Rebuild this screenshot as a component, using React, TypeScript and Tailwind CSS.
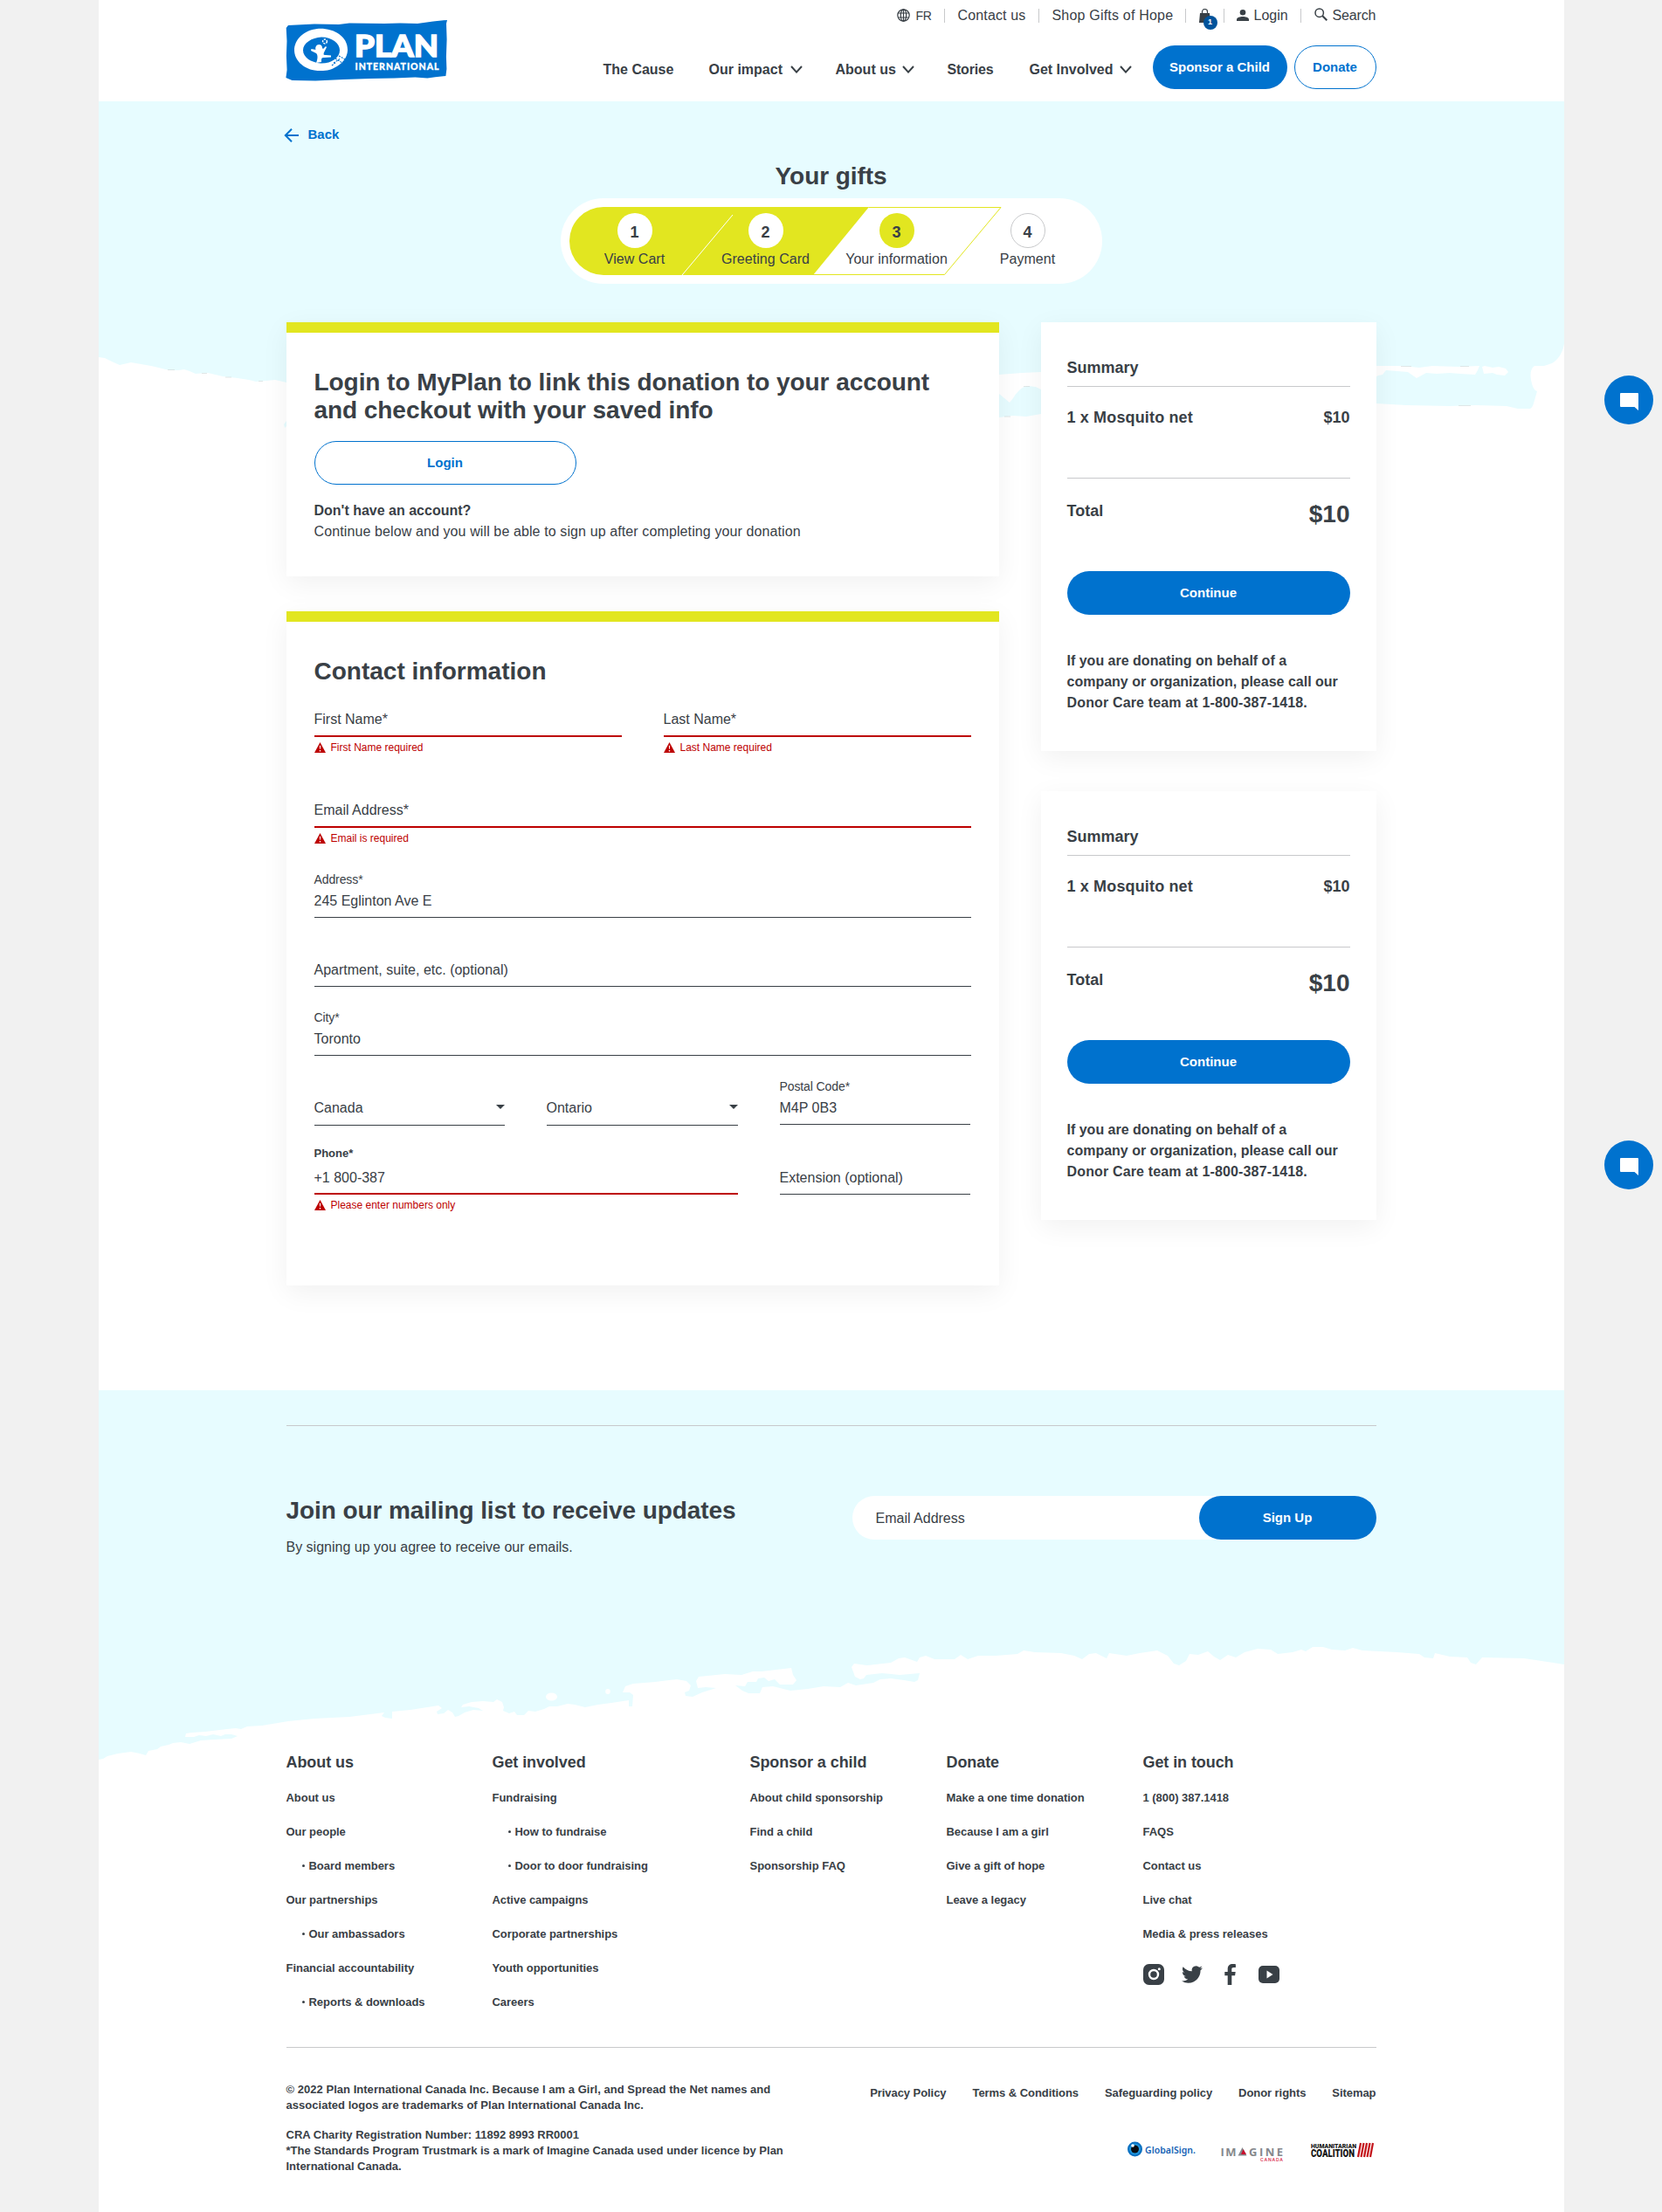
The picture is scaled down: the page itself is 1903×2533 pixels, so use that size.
import React from 'react'
import clsx from 'clsx'

type FieldProps = {
  width: string
  height: string
  value: string
  label?: string
  labelClass?: string
  padClass?: string
  error?: string
  select?: boolean
}

function WarningIcon() {
  return (
    <svg width="13" height="12" viewBox="0 0 13 12" className="shrink-0">
      <path d="M6.5 0 13 12H0z" fill="#bd0000" />
      <path d="M5.8 3.8h1.4l-.3 4h-.8zM5.8 9h1.4v1.4H5.8z" fill="#fff" />
    </svg>
  )
}

function Field({ width, height, value, label, labelClass, padClass, error, select }: FieldProps) {
  return (
    <div className={width}>
      <div
        className={clsx(
          'flex flex-col justify-end',
          height,
          error ? 'border-b-2 border-[#bd0000]' : 'border-b border-[#394046]',
          padClass ?? (select ? 'pb-[7px]' : 'pb-[6px]'),
        )}
      >
        {label && <span className={clsx('leading-4', labelClass ?? 'mb-[5px] text-sm tracking-[-0.1px]')}>{label}</span>}
        <span className="flex items-center justify-between leading-6">
          {value}
          {select && (
            <svg width="10" height="5" viewBox="0 0 10 5" className="-mt-1">
              <path d="M0 0h10L5 5z" fill="#394046" />
            </svg>
          )}
        </span>
      </div>
      {error && (
        <div className="flex h-5 items-end gap-[6px] text-xs leading-4 text-[#bd0000]">
          <span className="pb-[2px]">
            <WarningIcon />
          </span>
          {error}
        </div>
      )}
    </div>
  )
}

function Chevron() {
  return (
    <svg width="14" height="9" viewBox="0 0 14 9" className="ml-2" fill="none">
      <path d="m1 1 6 6.6L13 1" stroke="#394046" strokeWidth="2" />
    </svg>
  )
}

function Rule() {
  return <span className="h-4 w-px bg-[#c8c9cb]" />
}

function Logo() {
  return (
    <svg width="186" height="72" viewBox="327 22 186 72">
      <path
        fill="#0072ce"
        d="m330 29 30-1.600 28 .5 12-1.400 40 .6 18-.5 20 .4 18-2.500 16-1.600-1 4 .6 18-.7 20 .5 14-1 8-12 1.300-9 1.200-14-1-24 1.200-28 .3-30 1.100-32 1.500-27-.4-7-3 1.200-9-.7-16 .6-17-.8-15z"
      />
      <path
        fill="#fff"
        fillRule="evenodd"
        d="M337 57.500c0-12 11-23 26-24.500 18-1.500 35 8 35 24 0 12-11 20-21 23-4 1-11 1.400-17 .5-13-2-23-12-23-23zm10 0c0 8 9 14 20 15 12 .5 22-6 22-15 0-8-9-15-21-15-11 .5-21 7-21 15z"
      />
      <path
        fill="#fff"
        d="M365 51c3 0 4 2 4 4l1 1 3-3 1 1-3 6c-1 3 0 3 2 3l6 .5v2l-8 .5c-3 0-3 1-3 5l-6 1c2-5 2-9 0-11l-6-3 .5-2 5 1c-1-3 1-6 3.500-6z"
      />
      <circle cx="372" cy="47.500" r="2.400" fill="none" stroke="#fff" strokeWidth="1.500" strokeDasharray="2 1" />
      <path d="m382 72 8-5M384 67l8 5M388 64l7 4M380 75l5-4" stroke="#0072ce" strokeWidth="1.100" strokeDasharray="2 1.200" />
      <text
        x="406"
        y="64.500"
        fill="#fff"
        stroke="#fff"
        strokeWidth="1.400"
        fontFamily="Lato"
        fontWeight="900"
        fontSize="34"
        textLength="96"
        lengthAdjust="spacingAndGlyphs"
      >
        PLAN
      </text>
      <text x="406.500" y="80" fill="#fff" stroke="#fff" strokeWidth=".3" fontFamily="Lato" fontWeight="900" fontSize="10.500" textLength="96">
        INTERNATIONAL
      </text>
    </svg>
  )
}

function Header() {
  return (
    <header className="flex h-[116px] justify-between bg-white pr-[215px] pl-[214px]">
      <div className="pt-[22px]">
        <Logo />
      </div>
      <div className="flex flex-col items-end whitespace-nowrap">
        <div className="flex h-[35px] items-center">
          <svg width="15" height="15" viewBox="0 0 15 15" fill="none" stroke="#394046" strokeWidth="1.200">
            <circle cx="7.500" cy="7.500" r="6.700" />
            <ellipse cx="7.500" cy="7.500" rx="3.200" ry="6.700" />
            <path d="M7.500.8v13.400M1.500 5h12M1.500 10h12" />
          </svg>
          <span className="ml-[7px] w-[18px] text-sm tracking-[-0.4px]">FR</span>
          <span className="ml-[14px] flex"><Rule /></span>
          <span className="ml-[15px] w-[78px] tracking-[0.15px]">Contact us</span>
          <span className="ml-[14px] flex"><Rule /></span>
          <span className="ml-[15px] w-[138px] tracking-[0.2px]">Shop Gifts of Hope</span>
          <span className="ml-[14px] flex"><Rule /></span>
          <span className="relative ml-[15px] w-[13px]">
            <svg width="13" height="16" viewBox="0 0 13 16">
              <path d="M1 5h11l1 11H0z" fill="#394046" />
              <path d="M3.500 6V3.500a3 3 0 0 1 6 0V6" fill="none" stroke="#394046" strokeWidth="1.200" />
            </svg>
            <span className="absolute top-2 left-[5px] flex size-4 items-center justify-center rounded-full bg-[#00539b] text-[9px] font-bold text-white">
              1
            </span>
          </span>
          <span className="ml-[15px] flex"><Rule /></span>
          <svg width="14" height="13" viewBox="0 0 14 13" className="ml-[14px]" fill="#394046">
            <ellipse cx="7" cy="3.300" rx="3.300" ry="3.300" />
            <path d="M0 13v-1.700C0 9 4 8 7 8s7 1 7 3.300V13z" />
          </svg>
          <span className="ml-[6px] w-[39px]">Login</span>
          <span className="ml-[14px] flex"><Rule /></span>
          <svg width="15" height="15" viewBox="0 0 15 15" className="-mt-[2px] ml-[15px]" fill="none" stroke="#394046">
            <circle cx="5.700" cy="5.700" r="4.700" strokeWidth="1.500" />
            <path d="m9.300 9.300 5 5" strokeWidth="2" />
          </svg>
          <span className="ml-[6px] w-[50px] tracking-[-0.15px]">Search</span>
        </div>
        <nav className="mt-[17px] flex h-[50px] items-center font-bold">
          <div className="mt-[5px] flex items-center">
            <span className="w-[81px]">The Cause</span>
            <span className="ml-10 w-[85px]">Our impact</span>
            <Chevron />
            <span className="ml-[38px] w-[68px]">About us</span>
            <Chevron />
            <span className="ml-[38px] w-[54px] tracking-[-0.2px]">Stories</span>
            <span className="ml-10 w-[95px]">Get Involved</span>
            <Chevron />
          </div>
          <span className="ml-6 flex h-[50px] w-[154px] items-center justify-center rounded-full bg-[#0072ce] pt-px text-[15px] text-white">
            Sponsor a Child
          </span>
          <span className="ml-2 flex h-[50px] w-[94px] items-center justify-center rounded-full border border-[#0072ce] pt-px text-[15px] text-[#0072ce]">
            Donate
          </span>
        </nav>
      </div>
    </header>
  )
}

const steps = [
  { n: 1, label: 'View Cart', tone: 'bg-white' },
  { n: 2, label: 'Greeting Card', tone: 'bg-white' },
  { n: 3, label: 'Your information', tone: 'bg-[#e2e620]' },
  { n: 4, label: 'Payment', tone: 'bg-white border border-[#c8c9cb]' },
]

function Stepper() {
  return (
    <div className="relative mx-auto h-[98px] w-[620px] rounded-full bg-white">
      <svg width="620" height="98" viewBox="642 227 620 98" className="absolute inset-0">
        <path d="M691 237H995L931 315H691a39 39 0 0 1 0-78z" fill="#e2e620" />
        <path d="m839 246-58 69" stroke="#fff" />
        <path d="M994.500 237.500H1146L1081.500 314.500H931" fill="none" stroke="#e2e620" />
      </svg>
      <ol className="relative flex pt-[17px] pl-[10px]">
        {steps.map((s) => (
          <li key={s.n} className="flex w-[150px] flex-col items-center">
            <span className={clsx('flex size-10 items-center justify-center rounded-full pt-[3px] text-lg leading-none font-bold', s.tone)}>
              {s.n}
            </span>
            <span className="mt-px leading-6 tracking-[0.05px]">{s.label}</span>
          </li>
        ))}
      </ol>
    </div>
  )
}

function Summary() {
  return (
    <section className="h-[491px] bg-white px-[30px] pt-[40px] font-bold shadow-[0_8px_30px_rgba(0,0,0,0.06)]">
      <h3 className="h-[34px] border-b border-[#c8c9cb] text-lg leading-6">Summary</h3>
      <div className="flex h-[105px] justify-between border-b border-[#c8c9cb] pt-[23px] text-lg leading-6">
        <span className="tracking-[0.15px]">1 x Mosquito net</span>
        <span>$10</span>
      </div>
      <div className="flex h-[106px] justify-between pt-[25px]">
        <span className="text-lg leading-6">Total</span>
        <span className="text-[28px] leading-8">$10</span>
      </div>
      <button className="flex h-[50px] w-full items-center justify-center rounded-full bg-[#0072ce] text-[15px] font-bold text-white">
        Continue
      </button>
      <p className="mt-[41px] leading-6 whitespace-nowrap">
        If you are donating on behalf of a<br />
        company or organization, please call our<br />
        <span className="tracking-[0.15px]">Donor Care team at 1-800-387-1418.</span>
      </p>
    </section>
  )
}

const topWash =
  'M113 116H1791V394Q1789 404 1784 410T1774 417L1768 419 1757 419Q1751 423 1753 435T1760 448Q1758 455 1756 462T1750 468L1738 468 1725 465 1690 464 1660 465 1610 464 1575 462V474H1200L1192 474 1175 477 1160 476 1144 478V480H336L326 490 325 486 328 482V438L315 435 305 436 293 437 285 435 272 433 255 431 238 427 224 428 217 425 211 423 204 424 194 424 173 419 150 415 137 418 128 414 120 410 113 409Z'

function TopWash() {
  return (
    <svg width="1678" height="380" viewBox="113 116 1678 380" className="absolute top-0 left-0">
      <path d={topWash} fill="#e7fcff" />
      <g fill="#fff">
        <path d="M1144 429 1170 427 1192 426V446L1186 443 1178 442Q1172 442 1167 447T1160 456L1156 461 1150 456 1144 451Z" />
        <path d="M1575 419 1605 419 1625 421 1640 419 1670 420 1694 419 1692 424 1689 429 1672 428 1660 427 1645 428 1633 427 1622 433 1612 426 1600 425 1587 424 1583 429 1578 430 1575 432Z" />
        <path d="M1697 420 1700 419 1709 421 1716 420 1724 422 1727 426 1723 430 1714 429 1709 427 1699 428Z" />
      </g>
      <path
        d="M192 423.500h8M231 427.500h6M258 432h7M296 436.500h5M1604 419.500h12M1672 419.500h10M1150 477h7M1172 442.500h7M1670 464.500h14"
        stroke="#d5dcdd"
        strokeWidth=".7"
      />
    </svg>
  )
}

const brushEdge =
  '113,2015 118,2014 123,2011 135,2008 150,2006 160,2008 167,2010 170,2005 180,2003 184,2000 193,1998 198,1996 207,1995 217,1997 230,1993 245,1992 265,1991 272,1988 265,1986 258,1986 253,1988 244,1986 236,1988 228,1987 222,1989 212,1989 213,1985 220,1984 235,1983 260,1980 270,1979 276,1980 283,1977 300,1976 330,1971 360,1968 400,1966 440,1961 437,1965 441,1967 449,1968 449,1960 470,1958 502,1953 506,1956 500,1960 501,1963 508,1962 513,1958 518,1961 521,1966 525,1965 532,1961 542,1958 553,1959 548,1956 537,1954 528,1955 530,1952 540,1949 553,1948 565,1949 569,1946 575,1949 577,1955 576,1959 583,1962 589,1960 592,1964 600,1964 605,1959 613,1960 623,1957 629,1954 638,1954 650,1951 658,1952 670,1955 685,1952 700,1950 720,1947 720,1954 724,1954 725,1941 721,1938 713,1938 716,1931 725,1928 750,1926 775,1923 786,1925 791,1930 789,1936 784,1938 785,1942 793,1943 804,1938 820,1933 808,1932 799,1933 797,1925 800,1920 830,1917 849,1918 862,1914 872,1914 906,1910 908,1918 912,1924 908,1929 893,1929 887,1923 880,1925 875,1921 868,1922 866,1926 856,1926 853,1931 842,1930 850,1936 857,1939 870,1939 873,1932 885,1931 905,1936 925,1934 943,1931 962,1932 971,1927 980,1930 1000,1927 1008,1923 1020,1922 1035,1924 1047,1926 1051,1924 1053,1916 1030,1918 1010,1916 992,1918 989,1922 985,1923 979,1920 975,1909 978,1905 985,1906 993,1907 1020,1904 1029,1899 1036,1898 1050,1903 1053,1898 1060,1896 1070,1900 1093,1900 1100,1895 1108,1900 1120,1896 1140,1896 1165,1894 1172,1890 1185,1892 1215,1893 1230,1896 1239,1900 1247,1894 1255,1893 1267,1899 1270,1893 1290,1896 1305,1893 1325,1890 1337,1896 1344,1905 1350,1907 1358,1902 1362,1894 1372,1895 1383,1891 1390,1897 1397,1901 1406,1895 1415,1898 1425,1892 1440,1888 1455,1889 1463,1894 1480,1892 1490,1889 1495,1891 1503,1886 1515,1886 1525,1889 1540,1890 1549,1887 1560,1890 1600,1892 1625,1894 1631,1898 1641,1899 1643,1893 1660,1897 1680,1898 1684,1904 1690,1906 1697,1898 1745,1899 1765,1902 1791,1906 1791,2040 113,2040'

type FootLink = { text: string; sub?: boolean }
const columns: { title: string; width: string; links: FootLink[] }[] = [
  {
    title: 'About us',
    width: 'w-[236px]',
    links: [
      { text: 'About us' },
      { text: 'Our people' },
      { text: 'Board members', sub: true },
      { text: 'Our partnerships' },
      { text: 'Our ambassadors', sub: true },
      { text: 'Financial accountability' },
      { text: 'Reports & downloads', sub: true },
    ],
  },
  {
    title: 'Get involved',
    width: 'w-[295px]',
    links: [
      { text: 'Fundraising' },
      { text: 'How to fundraise', sub: true },
      { text: 'Door to door fundraising', sub: true },
      { text: 'Active campaigns' },
      { text: 'Corporate partnerships' },
      { text: 'Youth opportunities' },
      { text: 'Careers' },
    ],
  },
  {
    title: 'Sponsor a child',
    width: 'w-[225px]',
    links: [{ text: 'About child sponsorship' }, { text: 'Find a child' }, { text: 'Sponsorship FAQ' }],
  },
  {
    title: 'Donate',
    width: 'w-[225px]',
    links: [
      { text: 'Make a one time donation' },
      { text: 'Because I am a girl' },
      { text: 'Give a gift of hope' },
      { text: 'Leave a legacy' },
    ],
  },
  {
    title: 'Get in touch',
    width: 'w-[260px]',
    links: [
      { text: '1 (800) 387.1418' },
      { text: 'FAQS' },
      { text: 'Contact us' },
      { text: 'Live chat' },
      { text: 'Media & press releases' },
    ],
  },
]

function Social() {
  return (
    <div className="mt-[15px] flex h-6 items-center text-[#394046]">
      <svg width="24" height="24" viewBox="0 0 24 24">
        <rect width="24" height="24" rx="6.500" fill="currentColor" />
        <circle cx="12" cy="12" r="5" fill="none" stroke="#fff" strokeWidth="2.400" />
        <circle cx="18.300" cy="5.700" r="1.500" fill="#fff" />
      </svg>
      <svg width="24" height="24" viewBox="0 0 24 24" className="ml-5" fill="currentColor">
        <path d="M23.950 4.570a10 10 0 0 1-2.820.77 4.960 4.960 0 0 0 2.160-2.720c-.95.550-2 .95-3.130 1.180a4.920 4.920 0 0 0-8.380 4.480C7.690 8.090 4.070 6.130 1.640 3.160a4.820 4.820 0 0 0-.67 2.480c0 1.710.87 3.210 2.190 4.100a4.900 4.900 0 0 1-2.230-.62v.06a4.920 4.920 0 0 0 3.950 4.830 5 5 0 0 1-2.210.08 4.940 4.940 0 0 0 4.600 3.420A9.870 9.870 0 0 1 0 19.540a13.990 13.990 0 0 0 7.550 2.210c9.050 0 14-7.500 14-13.980 0-.21 0-.42-.02-.63a9.940 9.940 0 0 0 2.460-2.550z" />
      </svg>
      <svg width="14" height="24" viewBox="0 0 14 24" className="ml-[25px]" fill="currentColor">
        <path d="M3.700 24V13.200H.3V9h3.400V5.800C3.700 2 6 0 9.500 0c1.600 0 3 .1 3.400.2v3.900h-2.300c-1.900 0-2.300.9-2.300 2.200V9h4.400l-.6 4.200H8.300V24z" />
      </svg>
      <svg width="24" height="20" viewBox="0 0 24 20" className="ml-[25px]">
        <rect width="24" height="20" rx="5" fill="currentColor" />
        <path d="m9.500 5.500 7 4.500-7 4.500z" fill="#fff" />
      </svg>
    </div>
  )
}

function Partners() {
  return (
    <svg width="285" height="26" viewBox="1291 2451 285 26">
      <circle cx="1299.500" cy="2461" r="8.500" fill="#0b6fc0" />
      <circle cx="1299.500" cy="2461" r="6.500" fill="#1f97df" />
      <circle cx="1299.500" cy="2461" r="4.500" fill="#0a0d12" />
      <circle cx="1297" cy="2457" r="1.800" fill="#fff" />
      <text x="1311" y="2465.500" fontFamily="Noto Sans" fontWeight="600" fontSize="10.500" fill="#1763b5" textLength="58">
        GlobalSign.
      </text>
      <g fontFamily="Open Sans" fontSize="13" fill="#85888c">
        <text x="1397.500" y="2468.500" textLength="18">IM</text>
        <text x="1430" y="2468.500" textLength="39">GINE</text>
      </g>
      <path d="m1422.500 2459 5 9.500h-10z" fill="#85888c" />
      <path d="m1423.500 2461 3.500 6h-6z" fill="#c8102e" />
      <text x="1443" y="2474.500" fontFamily="Inter" fontWeight="600" fontSize="5" fill="#dc3555" textLength="26">
        CANADA
      </text>
      <g fill="#161616" fontFamily="Roboto" fontWeight="900">
        <text x="1501" y="2460" fontSize="8" textLength="52" lengthAdjust="spacingAndGlyphs">
          HUMANITARIAN
        </text>
        <text x="1501" y="2469.500" fontSize="12" textLength="50" lengthAdjust="spacingAndGlyphs">
          COALITION
        </text>
      </g>
      <path
        d="m1558 2454-3 16M1561.500 2454l-3 16M1565 2454l-3 16M1568.500 2454l-3 16M1572 2454l-3 16"
        stroke="#c4161c"
        strokeWidth="2.200"
      />
    </svg>
  )
}

function Footer() {
  return (
    <footer className="relative h-[941px] bg-white">
      <svg width="1678" height="448" viewBox="113 1592 1678 448" className="absolute top-0 left-0">
        <rect x="113" y="1592" width="1678" height="448" fill="#e7fcff" />
        <polygon points={brushEdge} fill="#fff" strokeLinejoin="round" />
        <ellipse cx="631.500" cy="1943" rx="6.500" ry="4.500" fill="#fff" />
        <ellipse cx="696" cy="1937" rx="2.800" ry="3" fill="#fff" />
      </svg>
      <div className="relative mx-[215px] pt-10">
        <div className="flex h-[374px] items-start justify-between border-t border-[#c8c9cb] pt-[80px]">
          <div className="pt-px">
            <h2 className="text-[28px] leading-8 font-bold tracking-[-0.08px]">Join our mailing list to receive updates</h2>
            <p className="mt-[14px] leading-6">By signing up you agree to receive our emails.</p>
          </div>
          <div className="flex h-[50px] w-[600px] items-center justify-between rounded-full bg-white pl-[27px]">
            <span className="pt-px">Email Address</span>
            <button className="h-[50px] w-[203px] rounded-full bg-[#0072ce] text-[15px] font-bold text-white">Sign Up</button>
          </div>
        </div>
        <div className="flex h-[338px] font-bold whitespace-nowrap">
          {columns.map((c) => (
            <div key={c.title} className={clsx('shrink-0', c.width)}>
              <h3 className="text-lg leading-6 tracking-[-0.08px]">{c.title}</h3>
              <ul className="mt-[9px] text-[13px] leading-[39px] tracking-[-0.03px]">
                {c.links.map((l) => (
                  <li key={l.text} className={clsx(l.sub && 'flex items-center pl-[18px]')}>
                    {l.sub && <span className="mr-[5px] size-[3px] rounded-full bg-[#394046]" />}
                    {l.text}
                  </li>
                ))}
              </ul>
              {c.title === 'Get in touch' && <Social />}
            </div>
          ))}
        </div>
        <div className="flex justify-between border-t border-[#c8c9cb] pt-[39px] text-[13px] leading-[18px] font-bold whitespace-nowrap">
          <div>
            <p className="tracking-[0.03px]">
              © 2022 Plan International Canada Inc. Because I am a Girl, and Spread the Net names and
              <br />
              associated logos are trademarks of Plan International Canada Inc.
            </p>
            <p className="mt-4">
              CRA Charity Registration Number: 11892 8993 RR0001
              <br />
              *The Standards Program Trustmark is a mark of Imagine Canada used under licence by Plan
              <br />
              International Canada.
            </p>
          </div>
          <div className="flex flex-col items-end pt-1">
            <div className="flex gap-[30px] tracking-[-0.06px]">
              <span>Privacy Policy</span>
              <span>Terms &amp; Conditions</span>
              <span>Safeguarding policy</span>
              <span>Donor rights</span>
              <span>Sitemap</span>
            </div>
            <div className="mt-[45px]">
              <Partners />
            </div>
          </div>
        </div>
      </div>
    </footer>
  )
}

function ChatButton({ top }: { top: string }) {
  return (
    <button className={clsx('absolute right-[10px] flex size-14 items-center justify-center rounded-full bg-[#0072ce]', top)}>
      <svg width="21" height="20" viewBox="0 0 21 20" className="mt-1">
        <path d="M1 0h19q1 0 1 1v19l-4.500-4H1q-1 0-1-1V1q0-1 1-1z" fill="#fff" />
      </svg>
    </button>
  )
}

export default function App() {
  return (
    <div className="relative h-[2533px] w-[1903px] overflow-hidden bg-[#f1f1f1] font-['Liberation_Sans',Arial,sans-serif] text-base text-[#394046]">
      <div className="mx-auto w-[1678px] bg-white">
        <Header />
        <main className="relative h-[1476px]">
          <TopWash />
          <div className="relative mx-[215px]">
            <div className="flex h-[70px] items-center pt-[7px]">
              <svg width="17" height="16" viewBox="0 0 17 16" fill="none" stroke="#0072ce" strokeWidth="2" className="-ml-[3px]">
                <path d="M9 .8 1.800 8 9 15.200M1.800 8H17" />
              </svg>
              <span className="ml-[11px] text-[15px] font-bold text-[#0072ce]">Back</span>
            </div>
            <h1 className="h-[41px] text-center text-[28px] leading-8 font-bold tracking-[-0.08px]">Your gifts</h1>
            <Stepper />
            <div className="mt-11 flex items-start justify-between">
              <div className="w-[816px]">
                <section className="h-[291px] border-t-12 border-[#e2e620] bg-white px-8 pt-[41px] shadow-[0_8px_30px_rgba(0,0,0,0.06)]">
                  <h2 className="text-[28px] leading-8 font-bold tracking-[-0.06px] whitespace-nowrap">
                    Login to MyPlan to link this donation to your account
                    <br />
                    and checkout with your saved info
                  </h2>
                  <button className="mt-[19px] h-[50px] w-[300px] rounded-full border border-[#0072ce] text-[15px] font-bold text-[#0072ce]">
                    Login
                  </button>
                  <p className="mt-[18px] leading-6 font-bold">Don't have an account?</p>
                  <p className="leading-6 tracking-[0.11px]">
                    Continue below and you will be able to sign up after completing your donation
                  </p>
                </section>
                <section className="mt-10 h-[772px] border-t-12 border-[#e2e620] bg-white px-8 pt-[41px] shadow-[0_8px_30px_rgba(0,0,0,0.06)]">
                  <h2 className="text-[28px] leading-8 font-bold">Contact information</h2>
                  <div className="flex items-start gap-12">
                    <Field width="w-[352px]" height="h-[59px]" value="First Name*" error="First Name required" />
                    <Field width="w-[352px]" height="h-[59px]" value="Last Name*" error="Last Name required" />
                  </div>
                  <Field width="w-full" height="h-[84px]" value="Email Address*" error="Email is required" />
                  <Field width="w-full" height="h-[83px]" value="245 Eglinton Ave E" label="Address*" />
                  <Field width="w-full" height="h-[79px]" value="Apartment, suite, etc. (optional)" />
                  <Field width="w-full" height="h-[79px]" value="Toronto" label="City*" />
                  <div className="flex items-start gap-12">
                    <Field width="w-[218px]" height="h-[80px]" value="Canada" select />
                    <Field width="w-[219px]" height="h-[80px]" value="Ontario" select />
                    <Field width="w-[218px]" height="h-[79px]" value="M4P 0B3" label="Postal Code*" />
                  </div>
                  <div className="flex items-start gap-12">
                    <Field
                      width="w-[485px]"
                      height="h-[79px]"
                      value="+1 800-387"
                      label="Phone*"
                      labelClass="mb-[8px] text-[13px] font-bold"
                      padClass="pb-[5px]"
                      error="Please enter numbers only"
                    />
                    <Field width="w-[218px]" height="h-[79px]" value="Extension (optional)" />
                  </div>
                </section>
              </div>
              <div className="flex w-[384px] flex-col gap-[46px]">
                <Summary />
                <Summary />
              </div>
            </div>
          </div>
        </main>
        <Footer />
      </div>
      <ChatButton top="top-[430px]" />
      <ChatButton top="top-[1306px]" />
    </div>
  )
}
